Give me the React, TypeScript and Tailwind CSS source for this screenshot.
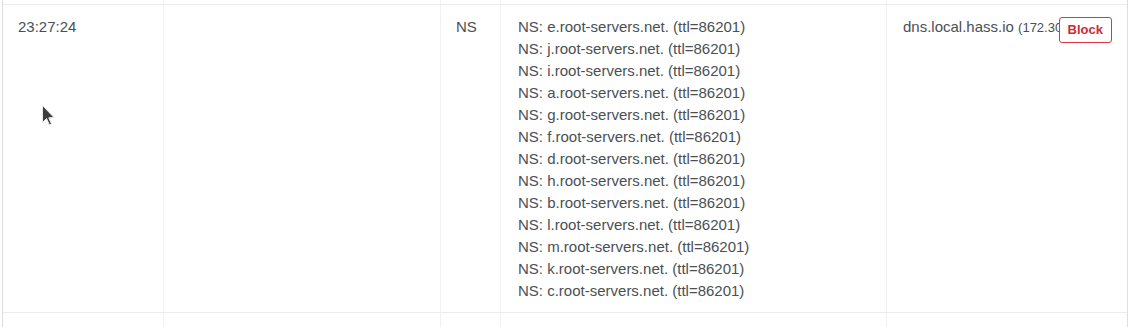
import React from 'react';

const answers = [
    'e', 'j', 'i', 'a', 'g', 'f', 'd', 'h', 'b', 'l', 'm', 'k', 'c',
];

const cell = 'border-r border-[#f1f1f1] pt-[11px] pb-[10px] leading-[22px]';

const App: React.FC = () => {
    return (
        <div className="relative h-[327px] w-[1137px] overflow-hidden bg-white text-[15px] text-[#4a4f55]" style={{ fontFamily: '"Liberation Sans", Arial, sans-serif' }}>
            <div className="ml-[2px] w-[1126px] border-x border-[#dedede]">
                {/* previous row tail */}
                <div className="flex h-[5px] border-b border-[#ececec]">
                    <div className="w-[161px] border-r border-[#f1f1f1]" />
                    <div className="w-[277px] border-r border-[#f1f1f1]" />
                    <div className="w-[60px] border-r border-[#f1f1f1]" />
                    <div className="w-[386px] border-r border-[#f1f1f1]" />
                    <div className="flex-1" />
                </div>

                <div className="flex border-b border-[#ececec]">
                    <div className={`${cell} w-[161px] pl-[15px]`}>23:27:24</div>
                    <div className={`${cell} w-[277px]`} />
                    <div className={`${cell} w-[60px] pl-[15px]`}>NS</div>
                    <div className={`${cell} w-[386px] pl-[17px]`}>
                        {answers.map(a => (
                            <div key={a}>NS: {a}.root-servers.net. (ttl=86201)</div>
                        ))}
                    </div>
                    <div className="flex min-w-0 flex-1 items-start pt-[11px] pr-[15px] pl-[16px] leading-[22px]">
                        <div className="min-w-0 flex-1 overflow-hidden whitespace-nowrap">
                            dns.local.hass.io <span className="text-[13px]">(172.30.32.3)</span>
                        </div>
                        <button className="mt-[1px] h-[26px] shrink-0 rounded-[3px] border border-[#dc3545] bg-white px-[8px] text-[13px] leading-[22px] font-bold text-[#cc2a36]">
                            Block
                        </button>
                    </div>
                </div>

                {/* next row head */}
                <div className="flex h-[20px]">
                    <div className="w-[161px] border-r border-[#f1f1f1]" />
                    <div className="w-[277px] border-r border-[#f1f1f1]" />
                    <div className="w-[60px] border-r border-[#f1f1f1]" />
                    <div className="w-[386px] border-r border-[#f1f1f1]" />
                    <div className="flex-1" />
                </div>
            </div>

            {/* mouse pointer */}
            <svg className="absolute top-[104px] left-[41px]" width="15" height="23" viewBox="0 0 15 23">
                <path d="M1.5 1.5 L1.5 18.5 L5.5 14.5 L8.5 21 L10.5 20 L7.8 13.8 L13 13.5 Z" fill="#3c3c3c" stroke="#e8e8e8" strokeWidth="1" />
            </svg>
        </div>
    );
};

export default App;
